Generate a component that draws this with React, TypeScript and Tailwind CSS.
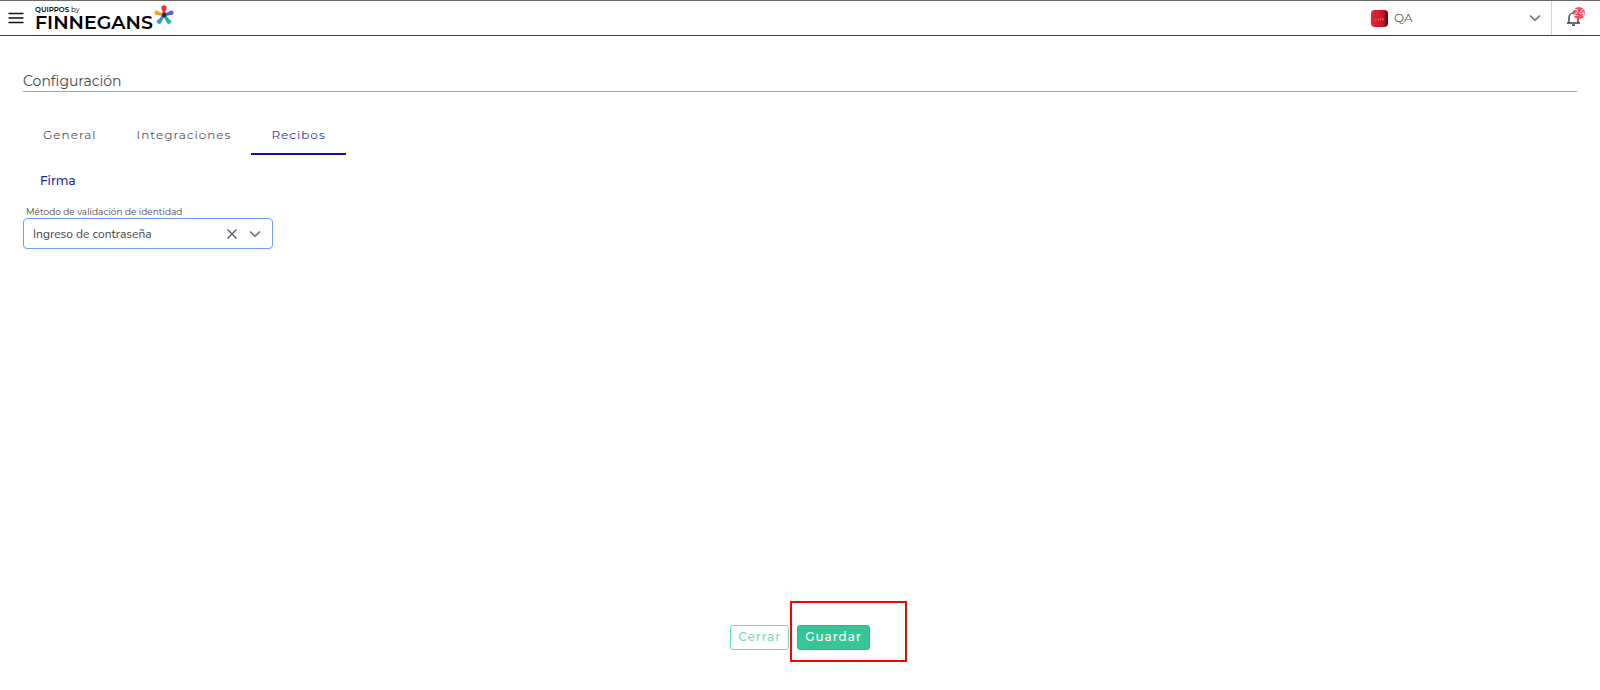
import React, { useState } from 'react';

const TABS = ['General', 'Integraciones', 'Recibos'];

const Chevron = () => (
  <svg className="w-3 h-3 shrink-0 pointer-events-none" viewBox="0 0 12 12" fill="none" stroke="#5b6470" strokeWidth="1.3" aria-hidden="true">
    <path d="M1 3.5 6 8.3l5-4.8" />
  </svg>
);

const StarLogo = () => (
  <svg className="w-5 h-5" viewBox="0 0 20 20" fill="none" strokeLinecap="round" aria-hidden="true">
    <path d="M10 10V4" stroke="#e8303c" strokeWidth="3.2" />
    <path d="m10 10 6.5-1.8" stroke="#4a5fb8" strokeWidth="3.2" />
    <path d="m10 10 4.2 6" stroke="#17b9a0" strokeWidth="3.2" />
    <path d="m10 10-4.2 6" stroke="#3f86c8" strokeWidth="3.2" />
    <path d="M10 10 3.5 8.2" stroke="#f79a23" strokeWidth="3.2" />
    <circle cx="10" cy="2.9" r="2.7" fill="#e8303c" />
    <circle cx="17.2" cy="7.8" r="2.4" fill="#4a6ec0" />
    <circle cx="14.8" cy="16.6" r="2.4" fill="#17c28c" />
    <circle cx="5.2" cy="16.6" r="2.4" fill="#22a6dc" />
    <circle cx="2.8" cy="7.8" r="2.4" fill="#f7a823" />
    <circle cx="10" cy="10" r="2.2" fill="#3a2240" />
  </svg>
);

const Header = () => (
  <header className="h-9 flex items-stretch bg-white border-t border-b border-t-[#6b6b6b] border-b-[#3f4149]">
    <button aria-label="Menú" className="pl-2 pr-[11px] flex items-center">
      <svg className="w-4 h-4" viewBox="0 0 16 16" stroke="#111" strokeWidth="1.3" aria-hidden="true">
        <path d="M.5 3.5h15M.5 8h15M.5 12.5h15" />
      </svg>
    </button>
    <a href="#" className="flex items-start gap-px pt-1 text-black">
      <span className="flex flex-col">
        <span className="text-[7px] leading-[9px] font-semibold">QUIPPOS <span className="font-normal">by</span></span>
        <span className="text-[19px] leading-[18px] font-semibold">FINNEGANS</span>
      </span>
      <StarLogo />
    </a>
    <div className="ml-auto w-[170px] flex items-center">
      <svg className="w-[17px] h-[17px] shrink-0" viewBox="0 0 16 16" aria-hidden="true">
        <defs>
          <linearGradient id="company" x1="0" y1="0" x2="1" y2="0">
            <stop offset="0" stopColor="#e0283a" />
            <stop offset=".7" stopColor="#c81424" />
            <stop offset="1" stopColor="#4a0c14" />
          </linearGradient>
        </defs>
        <rect width="16" height="16" rx="3.5" fill="url(#company)" />
        <path d="M4.5 8.5v1.5M7 7.5v2.5M9.2 7.5v2.5M11.4 7.5v2.5" stroke="#e8707c" strokeWidth=".8" />
      </svg>
      <select aria-label="Empresa" className="flex-1 min-w-0 appearance-none bg-transparent pl-[6px] text-xs leading-4 text-[#555] outline-none">
        <option>QA</option>
      </select>
      <Chevron />
    </div>
    <div className="ml-[10px] w-[49px] border-l border-[#d5d5d5] flex items-center pl-[14px]">
      <button aria-label="Notificaciones" className="relative">
        <svg className="w-4 h-4" viewBox="0 0 16 16" fill="none" stroke="#3a4048" strokeWidth="1.4" aria-hidden="true">
          <path d="M1 13h13M3 12.8V7.4a4.5 4.5 0 0 1 9 0v5.4M7.5 2.9V1.2" />
          <path d="M6 15.1h3" strokeWidth="1.6" />
        </svg>
        <span className="absolute -top-[3px] left-[7px] w-3 h-3 rounded-full bg-[#ff4d57] text-white text-[10px] leading-3 flex justify-center">24</span>
      </button>
    </div>
  </header>
);

export default function App() {
  const [tab, setTab] = useState('Recibos');
  const [method, setMethod] = useState('password');

  return (
    <div className="min-h-screen flex flex-col bg-white font-['Montserrat','Inter',sans-serif]">
      <Header />
      <main className="flex-1 flex flex-col px-[23px]">
        <h1 className="mt-[35px] text-sm leading-5 text-[#444] border-b border-[#a3a3a8]">Configuración</h1>

        <nav className="mt-[22px] flex" role="tablist">
          {TABS.map(name => (
            <button
              key={name}
              role="tab"
              aria-selected={tab === name}
              onClick={() => setTab(name)}
              className={`h-[41px] px-5 pt-[2px] text-xs leading-5 tracking-[1px] border-b-2 ${tab === name ? 'text-[#2636b0] border-[#10109c]' : 'text-[#555] border-transparent'}`}
            >
              {name}
            </button>
          ))}
        </nav>

        <section>
          <h2 className="mt-4 pl-[17px] text-xs leading-5 font-medium text-[#1c2a9c]">Firma</h2>
          <label htmlFor="metodo" className="block mt-[15px] pl-[3px] text-[9px] leading-3 text-[#444]">Método de validación de identidad</label>
          <div className="w-[250px] h-[31px] flex items-center gap-[11px] pl-[9px] pr-[11px] rounded-[4px] border border-[#6f9ff8]">
            <select
              id="metodo"
              value={method}
              onChange={e => setMethod(e.target.value)}
              className="flex-1 min-w-0 appearance-none bg-transparent font-['Nunito','Open_Sans',sans-serif] text-xs leading-5 text-[#444] outline-none"
            >
              <option value=""></option>
              <option value="password">Ingreso de contraseña</option>
            </select>
            <button aria-label="Limpiar" onClick={() => setMethod('')}>
              <svg className="w-3 h-3" viewBox="0 0 12 12" stroke="#4b5563" strokeWidth="1.2" aria-hidden="true">
                <path d="m1.5 1.5 9 9M10.5 1.5l-9 9" />
              </svg>
            </button>
            <Chevron />
          </div>
        </section>

        <footer className="mt-auto pb-10 flex justify-center gap-2 text-xs leading-5 tracking-[1px] font-medium">
          <button className="h-[25px] px-[7px] pb-[2px] rounded-[3px] border border-[#5fe3b8] text-[#6fe3bc]">Cerrar</button>
          <div className="relative">
            <button className="h-[25px] px-[7px] pb-[2px] rounded-[3px] border border-[#22bd8a] bg-[#36c596] text-white">Guardar</button>
            <div className="absolute -top-6 -left-[7px] w-[117px] h-[61px] border-2 border-[#ff0000] pointer-events-none" />
          </div>
        </footer>
      </main>
    </div>
  );
}
